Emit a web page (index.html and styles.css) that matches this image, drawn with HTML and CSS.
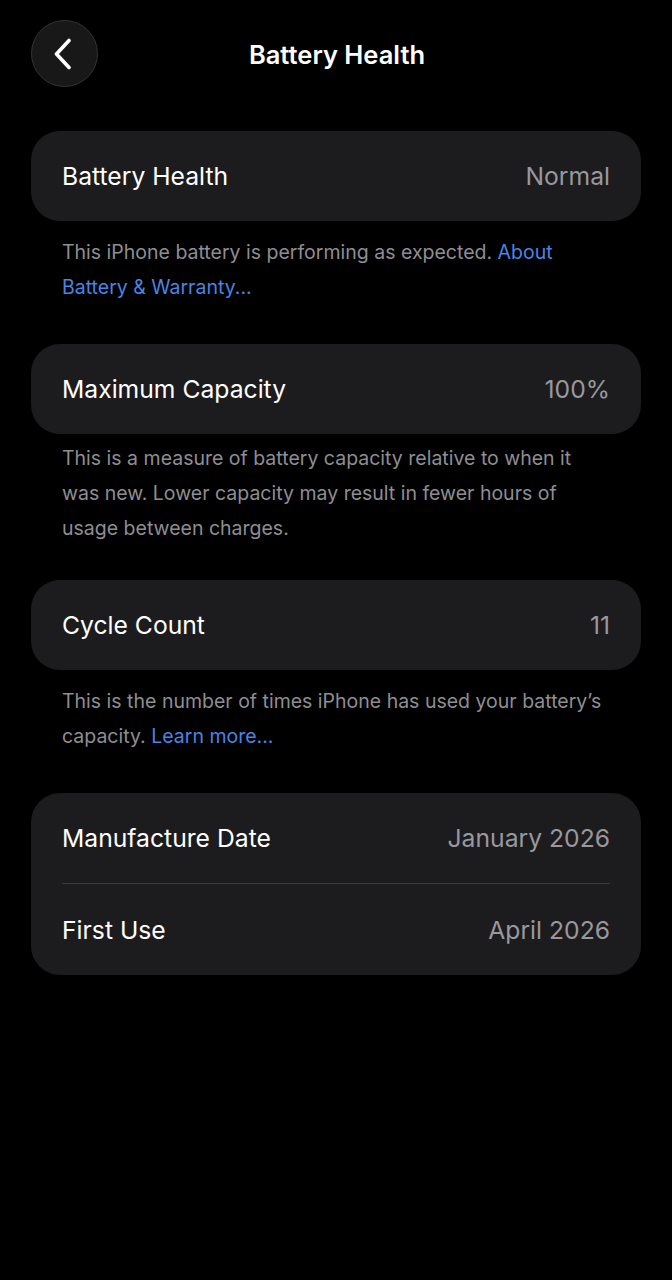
FILE: index.html
```html
<!DOCTYPE html>
<html lang="en">
<head>
<meta charset="utf-8">
<title>Battery Health</title>
<link rel="stylesheet" href="styles.css">
</head>
<body>
<div class="page">
  <header class="header">
    <button class="back" aria-label="Back">
      <svg width="20" height="32" viewBox="0 0 20 32" fill="none">
        <path d="M16 2.5 L3.5 16 L16 29.5" stroke="#ffffff" stroke-width="3.6" stroke-linecap="round" stroke-linejoin="round"/>
      </svg>
    </button>
    <h1 class="title">Battery Health</h1>
  </header>

  <section class="group first">
    <div class="card">
      <div class="row"><span class="label">Battery Health</span><span class="value">Normal</span></div>
    </div>
    <p class="note">This iPhone battery is performing as expected. <a class="link">About Battery &amp; Warranty...</a></p>
  </section>

  <section class="group">
    <div class="card">
      <div class="row"><span class="label">Maximum Capacity</span><span class="value">100%</span></div>
    </div>
    <p class="note tight">This is a measure of battery capacity relative to when it was new. Lower capacity may result in fewer hours of usage between charges.</p>
  </section>

  <section class="group after-tight">
    <div class="card">
      <div class="row"><span class="label">Cycle Count</span><span class="value">11</span></div>
    </div>
    <p class="note">This is the number of times iPhone has used your battery’s capacity. <a class="link">Learn more...</a></p>
  </section>

  <section class="group">
    <div class="card">
      <div class="row"><span class="label">Manufacture Date</span><span class="value">January 2026</span></div>
      <div class="divider"></div>
      <div class="row"><span class="label">First Use</span><span class="value">April 2026</span></div>
    </div>
  </section>
</div>
</body>
</html>
```

FILE: styles.css
```css
* { box-sizing: border-box; }
html, body { margin: 0; padding: 0; background: #000; }
body {
  font-family: Inter, "Noto Sans", sans-serif;
  color: #fff;
  width: 672px;
  min-height: 1280px;
}
.page {
  padding: 20px 31px 0 31px;
}
.header {
  position: relative;
  height: 67px;
  display: flex;
  align-items: center;
  justify-content: center;
}
.back {
  position: absolute;
  left: 0;
  top: 0;
  width: 67px;
  height: 67px;
  border-radius: 50%;
  background: #181818;
  border: 1px solid #333333;
  display: flex;
  align-items: center;
  justify-content: center;
  padding: 0 4px 0 0;
}
.title {
  margin: 2px 0 0 2px;
  font-size: 25.5px;
  font-weight: 600;
  letter-spacing: 0;
}
.group { margin-top: 39px; }
.group.first { margin-top: 44px; }
.group.after-tight { margin-top: 34px; }
.card {
  background: #1c1c1e;
  border-radius: 29px;
  padding: 0 31px;
}
.row {
  height: 90px;
  display: flex;
  align-items: center;
  justify-content: space-between;
  font-size: 24.7px;
  letter-spacing: 0;
}
.label { color: #fff; }
.value { color: #98989e; }
.divider {
  height: 1px;
  background: #3a3a3c;
}
.card .row + .divider + .row { height: 91px; }
.note {
  margin: 14px 0 0 0;
  padding: 0 31px;
  font-size: 19.5px;
  line-height: 35px;
  color: #8e8e93;
  letter-spacing: 0;
}
.note.tight { margin-top: 7px; }
.link { color: #4a84e4; }
```
